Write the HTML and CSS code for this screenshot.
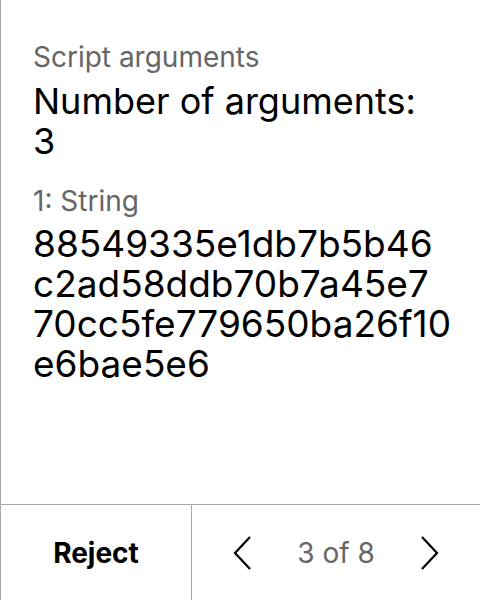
FILE: index.html
```html
<!DOCTYPE html>
<html>
<head>
<meta charset="utf-8">
<link rel="stylesheet" href="styles.css">
</head>
<body>
<div class="panel">
  <main class="content">
    <div class="label">Script arguments</div>
    <div class="title">Number of arguments:<br>3</div>
    <div class="label arg-label">1: String</div>
    <div class="value">88549335e1db7b5b46<br>c2ad58ddb70b7a45e7<br>70cc5fe779650ba26f10<br>e6bae5e6</div>
  </main>
  <footer class="footer">
    <button class="reject">Reject</button>
    <div class="pager">
      <button class="chev" aria-label="Previous">
        <svg width="18" height="34" viewBox="0 0 18 34"><path d="M17 1 L2 17 L17 33" fill="none" stroke="#000" stroke-width="2.2"/></svg>
      </button>
      <span class="count">3 of 8</span>
      <button class="chev" aria-label="Next">
        <svg width="18" height="34" viewBox="0 0 18 34"><path d="M1 1 L16 17 L1 33" fill="none" stroke="#000" stroke-width="2.2"/></svg>
      </button>
    </div>
  </footer>
</div>
</body>
</html>
```
FILE: styles.css
```css
* { box-sizing: border-box; }
html, body { margin: 0; padding: 0; background: #fff; }
body { font-family: Inter, "Noto Sans", sans-serif; color: #000; }
.panel {
  width: 480px;
  height: 600px;
  border-left: 1px solid #aaa;
  display: flex;
  flex-direction: column;
}
.content {
  flex: 1;
  padding: 39px 32px 0 32px;
}
.label {
  font-size: 28px;
  line-height: 36px;
  color: #666;
}
.title {
  font-size: 36px;
  line-height: 40px;
  margin-top: 6px;
}
.arg-label { margin-top: 22px; }
.value {
  font-size: 37px;
  line-height: 40px;
  margin-top: 5px;
}
.footer {
  height: 96px;
  border-top: 1px solid #aaa;
  display: grid;
  grid-template-columns: 191px 1fr;
}
button {
  background: none;
  border: none;
  padding: 0;
  font: inherit;
  color: inherit;
}
.reject {
  border-right: 1px solid #aaa;
  font-size: 28px;
  font-weight: 700;
}
.pager {
  display: flex;
  align-items: center;
  justify-content: center;
  gap: 46px;
}
.chev { display: flex; width: 18px; height: 34px; }
.count { font-size: 28px; color: #666; }
```
